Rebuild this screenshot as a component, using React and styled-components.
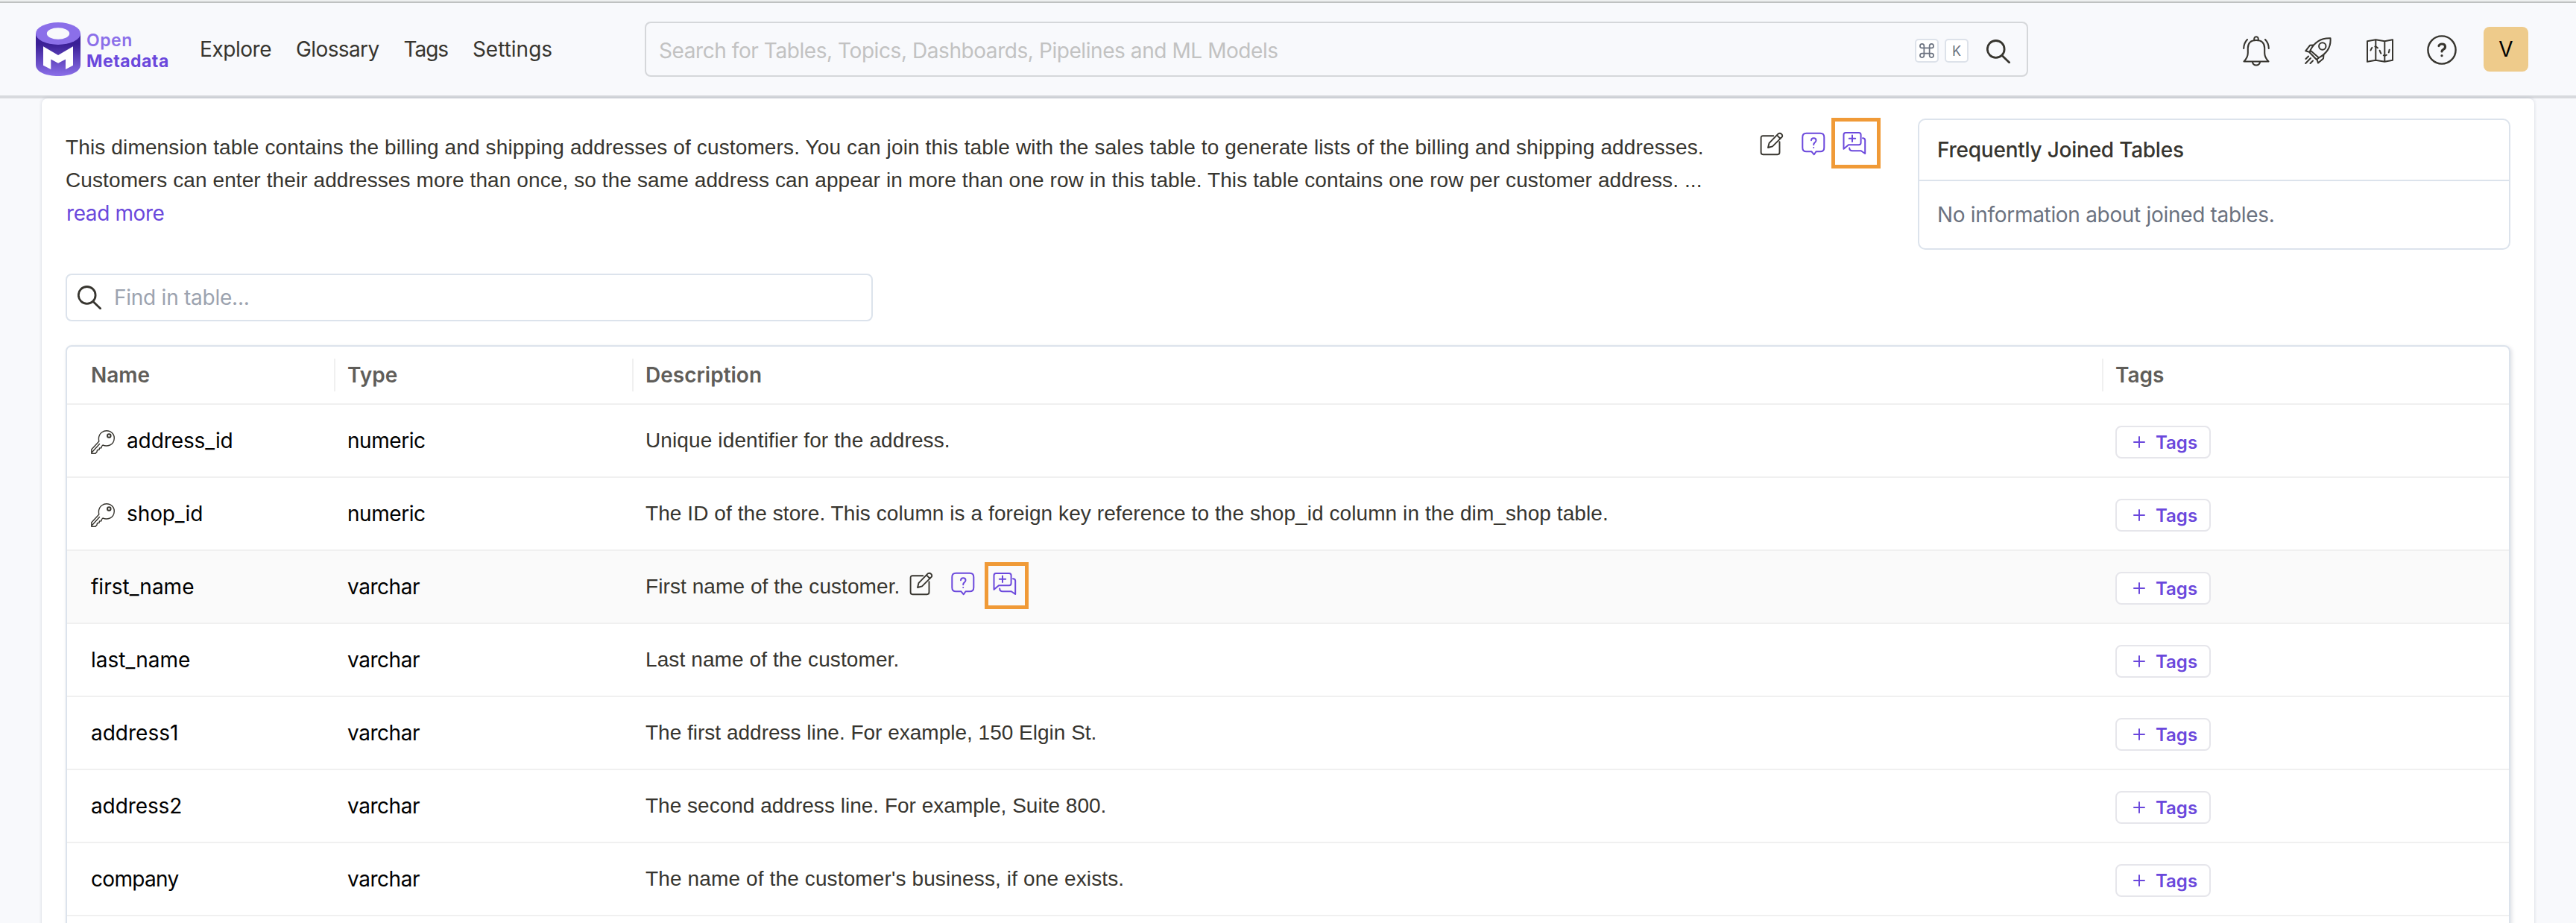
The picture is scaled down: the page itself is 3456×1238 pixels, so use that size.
import React from "react";
import styled, { createGlobalStyle } from "styled-components";

const ink = "#37352f";
const purple = "#6b48dc";

const Global = createGlobalStyle`
  *{box-sizing:border-box}
  html,body{margin:0;padding:0}
  body{height:1238px;overflow:hidden;background:#f8f9fc;color:${ink};font-family:Inter,"Liberation Sans",sans-serif;font-size:28px}
  svg{flex:none;display:block}
`;
const Text = styled.span`
  display:block;white-space:nowrap;font-family:Inter,sans-serif;
  font-size:${(p) => p.$size || 28}px;font-weight:${(p) => p.$weight || 400};
  color:${(p) => p.$color || "inherit"};letter-spacing:${(p) => p.$track || 0}px;
`;
const Prose = styled(Text)`font-family:"Liberation Sans",sans-serif;`;

const Page = styled.div`height:1238px;overflow:hidden;display:flex;flex-direction:column;border-top:2px solid #eef0f0;`;
const Bar = styled.header`
  height:130px;flex:none;display:flex;align-items:center;border-top:2px solid #bfc1c1;
  border-bottom:4px solid #d8dade;padding:0 64px 0 48px;background:#f8f9fc;
`;
const Logo = styled.div`display:flex;align-items:center;width:220px;gap:8px;`;
const LogoText = styled.div`
  font:600 23px/28px Inter,sans-serif;letter-spacing:.5px;color:#8b6fe9;padding-top:3px;
  b{display:block;color:${purple};font-weight:700;}
`;
const Nav = styled.nav`display:flex;gap:33px;width:597px;`;
const SearchBox = styled.div`
  width:1856px;height:74px;border:2px solid #d5d7da;border-radius:8px;display:flex;align-items:center;
  gap:8px;padding:4px 22px 0 17px;
`;
const Placeholder = styled(Text)`flex:1;`;
const Kbd = styled.span`
  width:32px;height:32px;border:2px solid #dde2ea;border-radius:5px;background:#fff;color:#6b7280;
  display:flex;align-items:center;justify-content:center;font:400 18px Inter,sans-serif;
`;
const SearchButton = styled.span`padding:2px 0 0 16px;`;
const Tools = styled.div`display:flex;align-items:center;margin-left:auto;gap:43px;`;
const Tool = styled.span`width:40px;padding-top:${(p) => p.$drop}px;display:flex;justify-content:center;`;
const Avatar = styled.div`
  width:60px;height:60px;border-radius:8px;background:#eecb8b;color:#000;display:flex;align-items:center;justify-content:center;
  font:400 28px Inter,sans-serif;margin-left:-7px;
`;
const Sheet = styled.main`
  flex:1;margin:0 56px;background:#fff;border-radius:8px 8px 0 0;padding:27px 32px 0;
  box-shadow:0 0 4px rgba(40,50,80,.18);
`;
const Top = styled.section`display:flex;height:208px;`;
const Intro = styled.div`width:2273px;padding-top:17px;line-height:44px;`;
const ReadMore = styled(Text)`padding-left:1px;`;
const Actions = styled.div`display:flex;align-items:flex-start;width:212px;margin-top:-1px;`;
const ActionIcon = styled.span`padding-top:19px;margin-right:${(p) => p.$gap}px;`;
const Highlight = styled.span`
  border:5px solid #f09a37;width:66px;height:68px;padding:0 4px 0 0;
  display:flex;align-items:center;justify-content:center;
`;
const Card = styled.aside`width:795px;height:176px;border:2px solid #dce3ec;border-radius:10px;`;
const CardHead = styled.div`height:82px;border-bottom:2px solid #dce3ec;display:flex;align-items:center;padding-left:24px;`;
const CardBody = styled.div`height:90px;display:flex;align-items:center;padding-left:24px;`;
const Finder = styled.div`
  width:1083px;height:64px;border:2px solid #dce3ec;border-radius:8px;display:flex;align-items:center;
  padding-left:14px;gap:17px;margin-bottom:32px;
`;
const Table = styled.div`
  border:2px solid #dce3ec;border-radius:8px 8px 0 0;height:900px;box-shadow:2px 2px 5px rgba(40,50,80,.15);
`;
const Row = styled.div`
  display:grid;grid-template-columns:344px 400px 1972px 1fr;align-items:center;padding-left:32px;
  height:${(p) => (p.$head ? 78 : 98)}px;border-bottom:2px solid #f0f0f0;background:${(p) => (p.$hover ? "#fafafa" : "transparent")};
`;
const HeadCell = styled.div`
  height:44px;display:flex;align-items:center;padding-left:${(p) => (p.$first ? 0 : 16)}px;margin-left:${(p) => (p.$first ? 0 : -18)}px;
  border-left:${(p) => (p.$first ? 0 : 2)}px solid #f0f0f0;
`;
const Cell = styled.div`display:flex;align-items:center;gap:16px;`;
const KeySlot = styled.span`padding-top:4px;`;
const DescCell = styled(Cell)`gap:0;`;
const RowIcon = styled.span`margin:0 ${(p) => p.$gap}px 8px 0;`;
const RowActions = styled.span`display:flex;align-items:center;padding-left:13px;`;
const RowHighlight = styled(Highlight)`width:59px;height:63px;padding:0 5px 6px 0;margin-bottom:3px;`;
const TagButton = styled.button`
  width:128px;height:44px;border:2px solid #e6e6eb;border-radius:8px;background:#fff;display:flex;align-items:center;
  padding:0 0 0 22px;gap:14px;margin-top:4px;
`;

const Line = ({ w, h = w, vb, sw = 2, color = ink, children }) => (
  <svg width={w} height={h} viewBox={vb || `0 0 ${w} ${h}`} fill="none" stroke={color} strokeWidth={sw} strokeLinecap="round" strokeLinejoin="round">{children}</svg>
);
const Search = () => <Line w={32} sw={2.8}><circle cx="12.7" cy="12.9" r="11.4" /><path d="M21 21.4L30.6 30.8" /></Line>;
const Edit = () => <Line w={32} sw={1.9}><path d="M18.3 5.2H4.3Q1.6 5.2 1.6 8V27.3Q1.6 30.2 4.3 30.2H23.7Q26.5 30.2 26.5 27.3V13.2M11 21L12.6 14.8L25 2.2Q27 .9 29 2.7Q31 4.7 29.8 6.7L17 19.4ZM23 4.4L27.6 9" /></Line>;
const Ask = () => <Line w={32} color={purple} sw={2}><path d="M6.5 1.8H25Q30.3 1.8 30.3 7V21Q30.3 26.3 25 26.3H19.5L16.8 30.3L13.5 26.3H6.5Q1.3 26.3 1.3 21V7Q1.3 1.8 6.5 1.8Z" /><path d="M13 11.2Q13.2 8.2 16.2 8.2Q19.5 8.2 19.5 11.2Q19.5 13 17.6 14.3Q16.2 15.3 16.2 17.3M16.2 20.9V21.1" /></Line>;
const Chat = () => <Line w={32} color={purple} sw={2}><path d="M4.2 1.9H21.8Q24.6 1.9 24.6 4.7V15.2Q24.6 18.2 21.8 18.2H8L1.5 23.8V4.7Q1.5 1.9 4.2 1.9ZM13 5.6V14M8.8 9.8H17.2M27 9.2Q30.2 9.2 30.2 12V30L24.8 26.2H13Q9.3 26.2 9.2 22.5" /></Line>;
const Key = () => <Line w={32} sw={1.4}><path d="M10.8 15Q9.2 7 14.5 3Q19.5 -.8 25.5 1.7Q31.2 4.5 31.3 10.7Q31 17.5 25.5 20Q20.5 22 16 20L14.5 21.5L14 23.7L11.5 24L11 26.3L8.5 26.7L8 29L6 31.3H.8V25.7ZM1.5 29.5L11.5 18.5" /><circle cx="24.3" cy="7.5" r="2.3" strokeWidth="1.9" /></Line>;
const Bell = () => <Line w={36} h={42} sw={2.1}><path d="M1.5 35.5Q6.8 30 6.8 24V17.5Q7 7 18 7Q29 7 29.2 17.5V24Q29.2 30 34.5 35.5ZM15.2 6.5Q15 2.2 18 2.2Q21 2.2 20.8 6.5M13 36.5Q14 40.5 18 40.5Q22 40.5 23 36.5M6 6Q1.2 11 1.2 18M30 6Q34.8 11 34.8 18" /></Line>;
const Rocket = () => <Line w={36} sw={2}><path d="M7.5 17.5Q16 .5 34.5 1.2Q36 18 19 27.5ZM7.5 17.5L6.7 20.5L16 30L19 27.5M11.5 10.5L7 10.8L1.2 18.3L7 20M25.5 23.5L25 28.5L18 34.5L16.5 29.5M1.5 29L5 25.5M1.2 35L8 28M7.5 35L11 31.5" /><circle cx="23.8" cy="12" r="4.7" /></Line>;
const Map = () => <Line w={36} h={32} sw={2}><path d="M1 3.2L12.3 1.2L24.3 3.2L35 1.2V28.8L24.3 30.8L12.3 28.8L1 30.8ZM12.3 1.2V28.8M24.3 3.2V30.8" /><path strokeDasharray="4 4.5" d="M5.5 15.5Q8 8.5 13 11Q17 13 18.5 18Q20.5 22.5 25 22.5Q31.5 20.5 30.5 11" /></Line>;
const Help = () => <Line w={40} sw={2.4}><circle cx="20" cy="20" r="18.6" /><path strokeWidth="3.2" d="M16 14.5Q17 12 20 12Q24.5 12 24.5 15.7Q24.5 18 22 19.3Q20 20.5 20 22M20 27.5V27.7" /></Line>;
const Cmd = () => <Line w={20} vb="0 0 22 22" color="#6b7280" sw={1.9}><path d="M7 7H15V15H7ZM7 7H4Q1 7 1 4Q1 1 4 1Q7 1 7 4ZM15 7H18Q21 7 21 4Q21 1 18 1Q15 1 15 4ZM7 15H4Q1 15 1 18Q1 21 4 21Q7 21 7 18ZM15 15H18Q21 15 21 18Q21 21 18 21Q15 21 15 18Z" /></Line>;
const Plus = () => <Line w={16} color={purple}><path d="M8 1V15M1 8H15" /></Line>;
const Brand = () => (
  <svg width="60" height="72" viewBox="0 0 60 72">
    <defs><linearGradient id="body" x1="0" y1="0" x2="0" y2="1"><stop offset=".25" stopColor="#3a1f96" /><stop offset="1" stopColor="#8b6fe9" /></linearGradient></defs>
    <path fill="url(#body)" d="M0 15H60V57C60 77 0 77 0 57Z" />
    <ellipse cx="30" cy="15" rx="30" ry="15" fill="#8b6fe9" /><ellipse cx="30" cy="15" rx="15.2" ry="7.8" fill="#f8f9fc" />
    <path fill="#fff" d="M10 32.3L30 44L50 32.3V57.7L40 63V49.5L30 54.7L20.3 49.5V63L10 57.7Z" />
  </svg>
);

const links = [["Explore", -0.45], ["Glossary", -0.62], ["Tags", -1.1], ["Settings", 0]];
const rows = [
  { name: "address_id", nameTrack: -0.1, type: "numeric", key: true, desc: "Unique identifier for the address.", track: 0.12 },
  { name: "shop_id", nameTrack: -0.1, type: "numeric", key: true, desc: "The ID of the store. This column is a foreign key reference to the shop_id column in the dim_shop table.", track: 0.08 },
  { name: "first_name", type: "varchar", desc: "First name of the customer.", track: 0.08, hover: true },
  { name: "last_name", type: "varchar", desc: "Last name of the customer.", track: 0.1 },
  { name: "address1", type: "varchar", desc: "The first address line. For example, 150 Elgin St.", track: 0 },
  { name: "address2", nameTrack: -0.1, type: "varchar", desc: "The second address line. For example, Suite 800.", track: 0.01 },
  { name: "company", nameTrack: -0.7, type: "varchar", desc: "The name of the customer's business, if one exists.", track: 0.13 },
];

export default function App() {
  return (
    <Page>
      <Global />
      <Bar>
        <Logo><Brand /><LogoText>Open<b>Metadata</b></LogoText></Logo>
        <Nav>{links.map(([label, track]) => <Text key={label} $track={track}>{label}</Text>)}</Nav>
        <SearchBox>
          <Placeholder $color="#c2c2c2" $track={-0.43}>Search for Tables, Topics, Dashboards, Pipelines and ML Models</Placeholder>
          <Kbd><Cmd /></Kbd><Kbd>K</Kbd><SearchButton><Search /></SearchButton>
        </SearchBox>
        <Tools>
          <Tool $drop={4}><Bell /></Tool><Tool $drop={4}><Rocket /></Tool><Tool $drop={4}><Map /></Tool><Tool $drop={2}><Help /></Tool>
          <Avatar>V</Avatar>
        </Tools>
      </Bar>
      <Sheet>
        <Top>
          <Intro>
            <Prose $track={0.138}>This dimension table contains the billing and shipping addresses of customers. You can join this table with the sales table to generate lists of the billing and shipping addresses.</Prose>
            <Prose $track={0.1}>Customers can enter their addresses more than once, so the same address can appear in more than one row in this table. This table contains one row per customer address. ...</Prose>
            <ReadMore $color={purple} $track={-0.4}>read more</ReadMore>
          </Intro>
          <Actions>
            <ActionIcon $gap={24}><Edit /></ActionIcon><ActionIcon $gap={8}><Ask /></ActionIcon><Highlight><Chat /></Highlight>
          </Actions>
          <Card>
            <CardHead><Text $weight={500} $track={-0.24}>Frequently Joined Tables</Text></CardHead>
            <CardBody><Text $color="#6b7280" $track={-0.31}>No information about joined tables.</Text></CardBody>
          </Card>
        </Top>
        <Finder><Search /><Text $color="#9ca3af" $track={-0.25}>Find in table...</Text></Finder>
        <Table>
          <Row $head>
            {["Name", "Type", "Description", "Tags"].map((h, i) => (
              <HeadCell key={h} $first={i === 0}><Text $weight={600} $color="#5f5d59">{h}</Text></HeadCell>
            ))}
          </Row>
          {rows.map((r) => (
            <Row key={r.name} $hover={r.hover}>
              <Cell>{r.key && <KeySlot><Key /></KeySlot>}<Text $color="#000" $track={r.nameTrack}>{r.name}</Text></Cell>
              <Cell><Text $color="#000" $track={-0.45}>{r.type}</Text></Cell>
              <DescCell>
                <Prose $track={r.track}>{r.desc}</Prose>
                {r.hover && (
                  <RowActions>
                    <RowIcon $gap={24}><Edit /></RowIcon><RowIcon $gap={13}><Ask /></RowIcon><RowHighlight><Chat /></RowHighlight>
                  </RowActions>
                )}
              </DescCell>
              <Cell><TagButton><Plus /><Text $size={24} $weight={600} $color={purple}>Tags</Text></TagButton></Cell>
            </Row>
          ))}
        </Table>
      </Sheet>
    </Page>
  );
}
